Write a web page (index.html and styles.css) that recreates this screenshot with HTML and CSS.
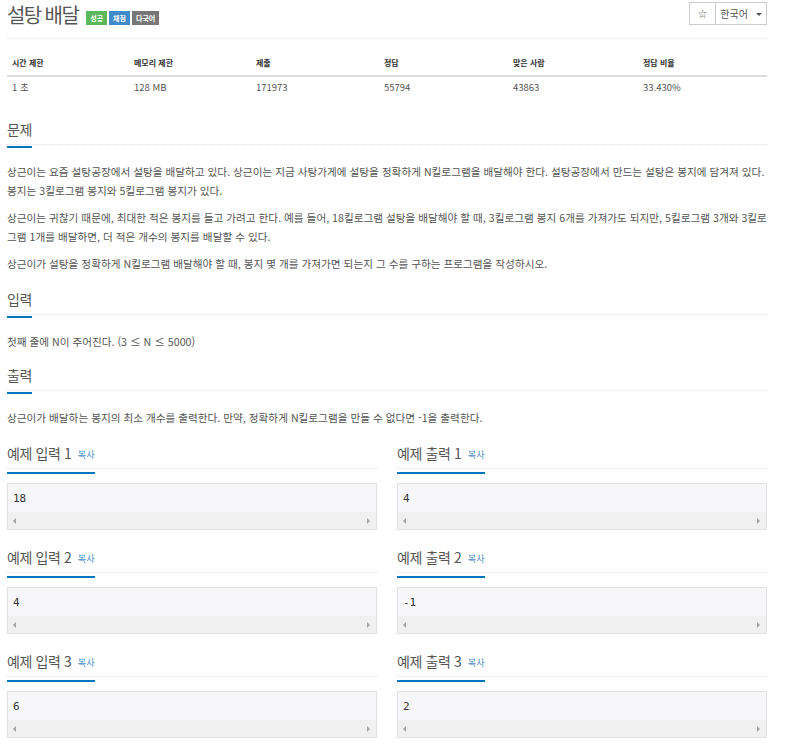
FILE: index.html
```html
<!DOCTYPE html>
<html lang="ko">
<head>
  <meta charset="UTF-8">
  <meta name="viewport" content="width=device-width, initial-scale=1.0">
  <title>설탕 배달</title>
  <link rel="stylesheet" href="styles.css">
</head>
<body>
  <div class="page">
    <div class="page-header">
      <div class="title-row">
        <h1 class="title">설탕 배달</h1>
        <span class="label label-success">성공</span>
        <span class="label label-primary">채점</span>
        <span class="label label-default">다국어</span>
      </div>
      <div class="btn-group">
        <button class="btn btn-star">☆</button>
        <button class="btn btn-lang">한국어 <span class="caret"></span></button>
      </div>
    </div>

    <table class="info-table">
      <thead>
        <tr><th>시간 제한</th><th>메모리 제한</th><th>제출</th><th>정답</th><th>맞은 사람</th><th>정답 비율</th></tr>
      </thead>
      <tbody>
        <tr><td>1 초</td><td>128 MB</td><td>171973</td><td>55794</td><td>43863</td><td>33.430%</td></tr>
      </tbody>
    </table>

    <section class="section">
      <div class="headline"><h2>문제</h2></div>
      <div class="content">
        <p>상근이는 요즘 설탕공장에서 설탕을 배달하고 있다. 상근이는 지금 사탕가게에 설탕을 정확하게 N킬로그램을 배달해야 한다. 설탕공장에서 만드는 설탕은 봉지에 담겨져 있다. 봉지는 3킬로그램 봉지와 5킬로그램 봉지가 있다.</p>
        <p>상근이는 귀찮기 때문에, 최대한 적은 봉지를 들고 가려고 한다. 예를 들어, 18킬로그램 설탕을 배달해야 할 때, 3킬로그램 봉지 6개를 가져가도 되지만, 5킬로그램 3개와 3킬로그램 1개를 배달하면, 더 적은 개수의 봉지를 배달할 수 있다.</p>
        <p>상근이가 설탕을 정확하게 N킬로그램 배달해야 할 때, 봉지 몇 개를 가져가면 되는지 그 수를 구하는 프로그램을 작성하시오.</p>
      </div>
    </section>

    <section class="section">
      <div class="headline"><h2>입력</h2></div>
      <div class="content">
        <p>첫째 줄에 N이 주어진다. (3 ≤ N ≤ 5000)</p>
      </div>
    </section>

    <section class="section section-tight">
      <div class="headline"><h2>출력</h2></div>
      <div class="content">
        <p>상근이가 배달하는 봉지의 최소 개수를 출력한다. 만약, 정확하게 N킬로그램을 만들 수 없다면 -1을 출력한다.</p>
      </div>
    </section>

    <div class="samples">
      <div class="sample">
        <div class="headline"><h2>예제 입력 1 <a class="copy">복사</a></h2></div>
        <div class="sample-box"><pre>18</pre><div class="scrollbar"><span class="arrow-left"></span><span class="arrow-right"></span></div></div>
      </div>
      <div class="sample">
        <div class="headline"><h2>예제 출력 1 <a class="copy">복사</a></h2></div>
        <div class="sample-box"><pre>4</pre><div class="scrollbar"><span class="arrow-left"></span><span class="arrow-right"></span></div></div>
      </div>
      <div class="sample">
        <div class="headline"><h2>예제 입력 2 <a class="copy">복사</a></h2></div>
        <div class="sample-box"><pre>4</pre><div class="scrollbar"><span class="arrow-left"></span><span class="arrow-right"></span></div></div>
      </div>
      <div class="sample">
        <div class="headline"><h2>예제 출력 2 <a class="copy">복사</a></h2></div>
        <div class="sample-box"><pre>-1</pre><div class="scrollbar"><span class="arrow-left"></span><span class="arrow-right"></span></div></div>
      </div>
      <div class="sample">
        <div class="headline"><h2>예제 입력 3 <a class="copy">복사</a></h2></div>
        <div class="sample-box"><pre>6</pre><div class="scrollbar"><span class="arrow-left"></span><span class="arrow-right"></span></div></div>
      </div>
      <div class="sample">
        <div class="headline"><h2>예제 출력 3 <a class="copy">복사</a></h2></div>
        <div class="sample-box"><pre>2</pre><div class="scrollbar"><span class="arrow-left"></span><span class="arrow-right"></span></div></div>
      </div>
      <div class="sample">
        <div class="headline"><h2>예제 입력 4 <a class="copy">복사</a></h2></div>
      </div>
      <div class="sample">
        <div class="headline"><h2>예제 출력 4 <a class="copy">복사</a></h2></div>
      </div>
    </div>
  </div>
</body>
</html>
```

FILE: styles.css
```css
body {
  margin: 0; font-family: "Noto Sans CJK KR", "Noto Sans", sans-serif; color: #555; background: #fff; }
.page {
  width: 760px; padding-left: 7px; }
.page-header {
  display: flex; justify-content: space-between; align-items: flex-start;
  border-bottom: 1px solid #eee; height: 38px; }
.title-row {
  display: flex; align-items: flex-start; gap: 2px; }
.title {
  margin: 0 6px 0 0; font-size: 20px; line-height: 29px; font-weight: 400; letter-spacing: -1.6px; color: #555; }
.label {
  margin-top: 11px; font-size: 7px; line-height: 14px; font-weight: 700; color: #fff; padding: 0 4px; }
.label-success { background: #5cb85c; }
.label-primary { background: #428bca; }
.label-default { background: #777; }
.btn-group {
  display: flex; margin-top: 2px; }
.btn {
  height: 23px; border: 1px solid #ccc; background: #fff; color: #555;
  font-family: inherit; font-size: 10px; padding: 0; margin: 0; }
.btn-star { width: 27px; font-size: 9px; }
.btn-lang { width: 52px; margin-left: -1px; }
.caret {
  display: inline-block; width: 0; height: 0; margin-left: 5px; vertical-align: 2px;
  border-top: 3px solid #555; border-left: 3px solid transparent; border-right: 3px solid transparent; }

.info-table {
  width: 100%; border-collapse: collapse; margin: 12px 0 17px; table-layout: fixed; }
.info-table th, .info-table td {
  text-align: left; padding: 5px 5px; line-height: 14px; }
.info-table th {
  font-size: 8px; font-weight: 700; color: #333; border-bottom: 2px solid #ddd; }
.info-table td {
  font-size: 9.5px; padding-top: 3px; color: #555; }
.info-table th:nth-child(1) { width: 112px; }
.info-table th:nth-child(2) { width: 112px; }
.info-table th:nth-child(3) { width: 118px; }
.info-table th:nth-child(4) { width: 119px; }
.info-table th:nth-child(5) { width: 120px; }

.section { margin-top: 13px; }
.section-tight { margin-top: 11px; }
.headline {
  border-bottom: 1px dotted #dde3ea; height: 28px; }
.headline h2 {
  display: inline-block; margin: 0; font-size: 14px; line-height: 20px; font-weight: 400;
  letter-spacing: -0.4px; color: #555; padding-bottom: 7px; border-bottom: 2px solid #0076c0; }
.content { margin-top: 17px; }
.content p {
  margin: 0 0 8px; font-size: 10.63px; line-height: 19px; }
.content p:last-child { margin-bottom: 0; }

.samples {
  display: grid; grid-template-columns: 1fr 1fr; column-gap: 20px; margin-top: 13px; }
.sample { margin-bottom: 14px; }
.copy {
  font-size: 9px; letter-spacing: 0; color: #428bca; margin-left: 3px; padding-right: 1px; vertical-align: 1px; }
.sample-box {
  margin-top: 14px; border: 1px solid #e1e1e8; background: #f7f7f9; }
.sample-box pre {
  margin: 0; padding: 9px 5px 7px; font-family: "DejaVu Sans Mono", monospace; font-size: 11px;
  line-height: 12px; color: #333; }
.scrollbar {
  display: flex; justify-content: space-between; align-items: center; height: 17px;
  background: #f0f0f0; padding: 0 6px 0 5px; }
.arrow-left, .arrow-right {
  width: 0; height: 0; border-top: 3px solid transparent; border-bottom: 3px solid transparent; }
.arrow-left { border-right: 3px solid #a3a3a3; }
.arrow-right { border-left: 3px solid #a3a3a3; }
```
